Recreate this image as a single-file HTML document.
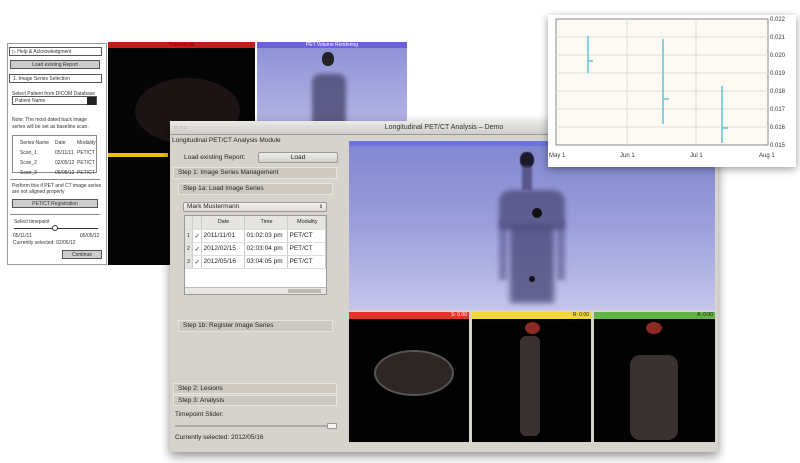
<!DOCTYPE html>
<html><head><meta charset="utf-8">
<style>
*{margin:0;padding:0;box-sizing:border-box}
body{width:800px;height:463px;background:#fff;position:relative;overflow:hidden;font-family:"Liberation Sans",sans-serif;color:#222}
.a{position:absolute}
.mk{font-size:5px;color:#333}
.bar{position:absolute;background:#cdc9c1;border:1px solid #e6e3dd;font-size:6.5px;padding-left:4px;line-height:10px;color:#222}
.t td{border-right:1px solid #ccc;border-bottom:1px solid #ddd;font-size:6.5px;height:13px;padding-left:2px}
.t{border-collapse:collapse;background:#fff;width:100%}
</style></head><body>

<!-- back mockup -->
<div class="a" style="left:7px;top:43px;width:100px;height:222px;background:#fff;border:1px solid #999"></div>
<div class="a mk" style="left:9px;top:47px;width:93px;height:9px;border:1px solid #555;padding:1px 2px">▷ Help &amp; Acknowledgment</div>
<div class="a mk" style="left:10px;top:60px;width:90px;height:9px;border:1px solid #555;background:#ccc;text-align:center;padding-top:1px">Load existing Report</div>
<div class="a mk" style="left:9px;top:74px;width:93px;height:9px;border:1px solid #555;padding:1px 3px">1. Image Series Selection</div>
<div class="a mk" style="left:12px;top:91px">Select Patient from DICOM Database</div>
<div class="a mk" style="left:12px;top:96px;width:85px;height:9px;border:1px solid #555;padding:1px 2px">Patient Name<span style="position:absolute;right:0;top:0;width:9px;height:8px;background:#222"></span></div>
<div class="a mk" style="left:12px;top:117px;width:85px;line-height:7px">Note: The most dated back image series will be set as baseline scan.</div>
<div class="a" style="left:12px;top:135px;width:85px;height:38px;border:1px solid #888"></div>
<div class="a mk" style="left:20px;top:138px;line-height:10px">Series Name<br>Scan_1<br>Scan_2<br>Scan_3</div>
<div class="a mk" style="left:55px;top:138px;line-height:10px">Date<br>05/11/11<br>02/05/12<br>05/05/12</div>
<div class="a mk" style="left:77px;top:138px;line-height:10px">Modality<br>PET/CT<br>PET/CT<br>PET/CT</div>
<div class="a" style="left:10px;top:179px;width:90px;height:1px;background:#888"></div>
<div class="a mk" style="left:12px;top:183px;line-height:6px">Perform this if PET and CT image series<br>are not aligned properly</div>
<div class="a mk" style="left:12px;top:199px;width:86px;height:9px;border:1px solid #555;background:#ccc;text-align:center;padding-top:1px">PET/CT Registration</div>
<div class="a" style="left:10px;top:214px;width:90px;height:1px;background:#888"></div>
<div class="a mk" style="left:14px;top:219px">Select timepoint</div>
<div class="a" style="left:14px;top:228px;width:84px;height:1px;background:#333"></div>
<div class="a" style="left:52px;top:225px;width:6px;height:6px;border:1px solid #333;border-radius:50%;background:#fff"></div>
<div class="a mk" style="left:13px;top:233px">05/11/11</div><div class="a mk" style="left:80px;top:233px">05/05/12</div>
<div class="a mk" style="left:13px;top:240px">Currently selected: 02/05/12</div>
<div class="a mk" style="left:62px;top:250px;width:40px;height:9px;border:1px solid #555;background:#ccc;text-align:center;padding-top:1px">Continue</div>

<div class="a" style="left:108px;top:42px;width:147px;height:223px;background:#050505"></div>
<div class="a" style="left:108px;top:42px;width:147px;height:6px;background:#c91a1a;font-size:5px;color:#600;text-align:center;line-height:6px">Transversal</div>
<div class="a" style="left:135px;top:78px;width:105px;height:66px;border-radius:50%;background:#1c1414"></div>
<div class="a" style="left:108px;top:153px;width:60px;height:4px;background:#e8c400"></div>
<div class="a" style="left:257px;top:42px;width:150px;height:90px;background:linear-gradient(#8e90d8,#b6b7e4)"></div>
<div class="a" style="left:257px;top:42px;width:150px;height:6px;background:#6b5ee0;font-size:5px;color:#fff;text-align:center;line-height:6px">PET Volume Rendering</div>
<div class="a" style="left:322px;top:52px;width:12px;height:14px;border-radius:45%;background:#222"></div>
<div class="a" style="left:312px;top:74px;width:34px;height:58px;border-radius:8px;background:#4a4870;filter:blur(2px);opacity:.8"></div>

<!-- front window -->
<div class="a" style="left:170px;top:121px;width:548px;height:331px;background:#d6d3cc;box-shadow:0 4px 10px rgba(0,0,0,.45)"></div>
<div class="a" style="left:170px;top:121px;width:548px;height:14px;background:linear-gradient(#ebe9e6,#cfcdc9);border-bottom:1px solid #999;font-size:7px;text-align:center;line-height:14px;color:#333">Longitudinal PET/CT Analysis – Demo</div>
<div class="a" style="left:174px;top:125px;font-size:6px;color:#888;letter-spacing:1px">○○○</div>

<div class="a" style="left:172px;top:137px;font-size:6.5px">Longitudinal PET/CT Analysis Module</div>
<div class="a" style="left:184px;top:154px;font-size:6.5px">Load existing Report:</div>
<div class="a" style="left:258px;top:152px;width:80px;height:11px;background:linear-gradient(#eeece8,#d4d1cb);border:1px solid #999;border-radius:2px;font-size:6.5px;text-align:center;line-height:9px">Load</div>
<div class="bar" style="left:173px;top:167px;width:164px;height:12px">Step 1: Image Series Management</div>
<div class="bar" style="left:178px;top:183px;width:155px;height:12px">Step 1a: Load Image Series</div>
<div class="a" style="left:183px;top:202px;width:144px;height:10px;background:linear-gradient(#f4f3f0,#dcd9d3);border:1px solid #999;border-radius:2px;font-size:6.5px;padding-left:3px;line-height:8px">Mark Mustermann<span style="position:absolute;right:3px;font-size:5px">⇕</span></div>
<div class="a" style="left:184px;top:215px;width:143px;height:80px;background:#fff;border:1px solid #999">
<table class="t">
<tr style="background:#e6e4e0"><td style="width:7px;height:9px"></td><td style="width:9px"></td><td style="width:43px;text-align:center;font-size:5.5px">Date</td><td style="width:43px;text-align:center;font-size:5.5px">Time</td><td style="text-align:center;font-size:5.5px">Modality</td></tr>
<tr><td style="background:#e6e4e0;font-size:5px">1</td><td>✓</td><td>2011/11/01</td><td>01:02:03 pm</td><td>PET/CT</td></tr>
<tr><td style="background:#e6e4e0;font-size:5px">2</td><td>✓</td><td>2012/02/15</td><td>02:03:04 pm</td><td>PET/CT</td></tr>
<tr><td style="background:#e6e4e0;font-size:5px">3</td><td>✓</td><td>2012/05/16</td><td>03:04:05 pm</td><td>PET/CT</td></tr>
</table>
<div class="a" style="left:0;top:71px;width:141px;height:7px;background:#e8e6e2;border-top:1px solid #bbb"><div class="a" style="left:103px;top:1px;width:33px;height:4px;background:#bdb8ad"></div></div>
</div>
<div class="bar" style="left:178px;top:320px;width:155px;height:12px">Step 1b: Register Image Series</div>
<div class="bar" style="left:173px;top:383px;width:164px;height:11px">Step 2: Lesions</div>
<div class="bar" style="left:173px;top:395px;width:164px;height:11px">Step 3: Analysis</div>
<div class="a" style="left:175px;top:411px;font-size:6.5px">Timepoint Slider:</div>
<div class="a" style="left:175px;top:425px;width:156px;height:2px;background:#aaa;border-radius:1px"></div>
<div class="a" style="left:327px;top:423px;width:10px;height:6px;background:#f4f3f0;border:1px solid #999;border-radius:1px"></div>
<div class="a" style="left:175px;top:434px;font-size:6.5px">Currently selected: 2012/05/16</div>

<div class="a" style="left:349px;top:141px;width:366px;height:169px;background:linear-gradient(#7f86d0,#9c9fdc 50%,#c4c5ea)"></div>
<div class="a" style="left:349px;top:141px;width:366px;height:5px;background:#6d74dc"></div>
<div class="a" style="left:520px;top:152px;width:14px;height:16px;border-radius:45%;background:#1a1a28;filter:blur(.5px)"></div>
<div class="a" style="left:522px;top:166px;width:10px;height:24px;background:#4c4a78;filter:blur(1px);opacity:.8"></div>
<div class="a" style="left:499px;top:190px;width:66px;height:40px;border-radius:12px 12px 0 0;background:#4a4878;filter:blur(2.5px);opacity:.75"></div>
<div class="a" style="left:499px;top:220px;width:8px;height:60px;background:#55548a;filter:blur(2px);opacity:.6"></div>
<div class="a" style="left:557px;top:220px;width:8px;height:60px;background:#55548a;filter:blur(2px);opacity:.6"></div>
<div class="a" style="left:510px;top:225px;width:44px;height:78px;background:#454374;filter:blur(3px);opacity:.75"></div>
<div class="a" style="left:532px;top:208px;width:10px;height:10px;border-radius:50%;background:#111"></div>
<div class="a" style="left:529px;top:276px;width:6px;height:6px;border-radius:50%;background:#111"></div>

<div class="a" style="left:349px;top:312px;width:120px;height:130px;background:#020202"></div>
<div class="a" style="left:349px;top:312px;width:120px;height:7px;background:#e3342a;font-size:5px;color:#fff;line-height:7px;text-align:right;padding-right:2px">S: 0.00</div>
<div class="a" style="left:374px;top:350px;width:80px;height:46px;border-radius:50%;background:#2e2624;border:2px solid #555"></div>
<div class="a" style="left:472px;top:312px;width:119px;height:130px;background:#020202"></div>
<div class="a" style="left:472px;top:312px;width:119px;height:7px;background:#f0d83c;font-size:5px;line-height:7px;text-align:right;padding-right:2px">R: 0.00</div>
<div class="a" style="left:525px;top:322px;width:15px;height:12px;border-radius:50%;background:#8a2a20"></div>
<div class="a" style="left:520px;top:336px;width:20px;height:100px;background:#3a3230;border-radius:6px"></div>
<div class="a" style="left:594px;top:312px;width:121px;height:130px;background:#020202"></div>
<div class="a" style="left:594px;top:312px;width:121px;height:7px;background:#62b247;font-size:5px;line-height:7px;text-align:right;padding-right:2px">A: 0.00</div>
<div class="a" style="left:646px;top:322px;width:16px;height:12px;border-radius:50%;background:#8a2a20"></div>
<div class="a" style="left:630px;top:355px;width:48px;height:85px;background:#3a3230;border-radius:10px"></div>

<!-- chart -->
<div class="a" style="left:548px;top:15px;width:248px;height:152px;background:#fff;box-shadow:0 2px 8px rgba(0,0,0,.4)"></div>
<svg class="a" style="left:548px;top:15px" width="248" height="152">
<rect x="8" y="4" width="212" height="126" fill="#fbf9f1" stroke="#888"/>
<g stroke="#ddd"><line x1="8" y1="22" x2="220" y2="22"/><line x1="8" y1="40" x2="220" y2="40"/><line x1="8" y1="58" x2="220" y2="58"/><line x1="8" y1="76" x2="220" y2="76"/><line x1="8" y1="94" x2="220" y2="94"/><line x1="8" y1="112" x2="220" y2="112"/><line x1="79" y1="4" x2="79" y2="130"/><line x1="148" y1="4" x2="148" y2="130"/></g>
<g stroke="#5ec4d4" stroke-width="1.5"><line x1="40" y1="21" x2="40" y2="58"/><line x1="40" y1="46" x2="45" y2="46"/><line x1="115" y1="24" x2="115" y2="109"/><line x1="115" y1="84" x2="121" y2="84"/><line x1="174" y1="71" x2="174" y2="128"/><line x1="174" y1="113" x2="180" y2="113"/></g>
<g font-size="6" fill="#333" font-family="Liberation Sans"><text x="222" y="6">0.022</text><text x="222" y="24">0.021</text><text x="222" y="42">0.020</text><text x="222" y="60">0.019</text><text x="222" y="78">0.018</text><text x="222" y="96">0.017</text><text x="222" y="114">0.016</text><text x="222" y="132">0.015</text>
<text x="1" y="142">May 1</text><text x="72" y="142">Jun 1</text><text x="142" y="142">Jul 1</text><text x="211" y="142">Aug 1</text></g>
</svg>
</body></html>
